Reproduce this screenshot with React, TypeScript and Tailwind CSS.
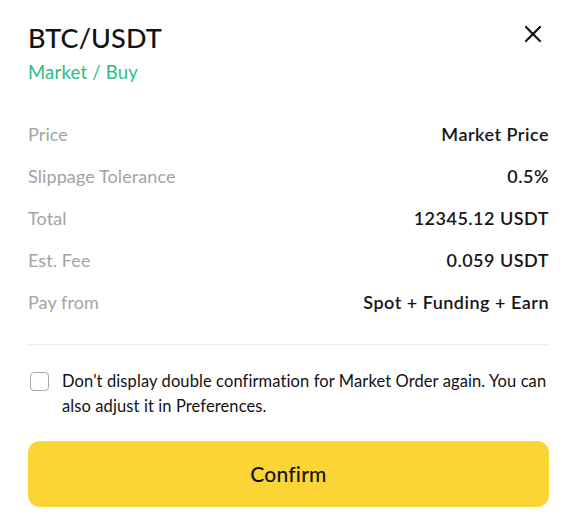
import { X } from 'lucide-react'

const rows = [
  { label: 'Price', value: 'Market Price' },
  { label: 'Slippage Tolerance', value: '0.5%' },
  { label: 'Total', value: '12345.12 USDT' },
  { label: 'Est. Fee', value: '0.059 USDT' },
  { label: 'Pay from', value: 'Spot + Funding + Earn' },
]

export default function App() {
  return (
    <main className="min-h-[531px] w-[570px] bg-white pl-[28px] pr-[21px] pt-[22px] font-['Lato','Liberation_Sans',sans-serif] text-[#121214]">
      <div className="flex items-start justify-between">
        <div>
          <h1 className="text-[27px] leading-[32px] font-medium tracking-[0.1px]">BTC/USDT</h1>
          <p className="mt-[6px] text-[18.5px] leading-[24px] tracking-[0.2px] text-[#2dbd7f]">Market / Buy</p>
        </div>
        <button type="button" className="mr-[2px] -mt-[2px] text-[#121214]">
          <X className="h-[28px] w-[28px]" strokeWidth={1.9} />
        </button>
      </div>

      <div className="mt-[38px] flex flex-col gap-[18px]">
        {rows.map((row) => (
          <div key={row.label} className="flex items-center justify-between text-[18px] leading-[24px]">
            <span className="tracking-[0.1px] text-[#a3a3a6]">{row.label}</span>
            <span className="font-semibold tracking-[0.5px] text-[#16161a]">{row.value}</span>
          </div>
        ))}
      </div>

      <div className="mt-[30px] h-px bg-[#ededed]" />

      <label className="mt-[24px] flex gap-[13px] text-[16.5px] leading-[25px] tracking-[0.1px] text-[#121214]">
        <span className="ml-[2px] mt-[3px] h-[19px] w-[19px] shrink-0 rounded-[4px] border-[1.5px] border-[#a9a9ad]" />
        <span>Don't display double confirmation for Market Order again. You can also adjust it in Preferences.</span>
      </label>

      <button
        type="button"
        className="mt-[22px] mb-[24px] flex h-[66px] w-full items-center justify-center rounded-[12px] bg-[#fad535] text-[21px] font-medium tracking-[0.2px] text-[#121214]"
      >
        Confirm
      </button>
    </main>
  )
}
